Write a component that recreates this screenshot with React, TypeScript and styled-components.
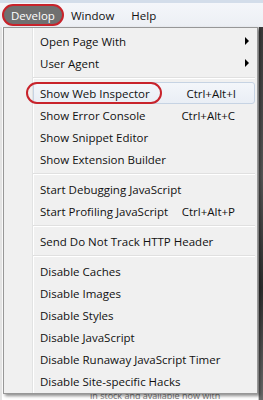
import React from "react";
import styled, { createGlobalStyle } from "styled-components";

const Global = createGlobalStyle`
  html, body { margin: 0; padding: 0; background: #fff; }
  body { width: 263px; height: 400px; overflow: hidden; font-family: "Segoe UI", "Open Sans", "Noto Sans", sans-serif; }
`;

const Screen = styled.div`
  position: relative;
  width: 263px;
  height: 400px;
  overflow: hidden;
  display: flex;
  flex-direction: column;
  font-size: 11.5px;
  color: #111;
`;

const MenuBar = styled.div`
  height: 24px;
  border-top: 3px solid #d3ddea;
  background: linear-gradient(#f4f6fa, #eceff4);
  display: flex;
  align-items: center;
  padding-left: 2px;
`;

const BarItem = styled.div<{ $active?: boolean }>`
  height: 22px;
  box-sizing: border-box;
  display: flex;
  align-items: center;
  padding: ${(p) => (p.$active ? "0 7px 0 7px" : "0 5px")};
  margin-right: ${(p) => (p.$active ? "0" : "3px")};
  border-radius: 11px;
  border: 2px solid ${(p) => (p.$active ? "#c8232b" : "transparent")};
  background: ${(p) => (p.$active ? "#707070" : "transparent")};
  color: ${(p) => (p.$active ? "#fff" : "#111")};
`;

const Page = styled.div`
  flex: 1;
  display: flex;
`;

const PageMain = styled.div`
  flex: 1;
  background: #fff;
  border-left: 2px solid #e4e4e4;
  display: flex;
  flex-direction: column;
  justify-content: flex-end;
`;

const PageNote = styled.div`
  font-size: 9px;
  color: #777;
  padding: 0 0 1px 88px;
  line-height: 7px;
  white-space: nowrap;
`;

const PageSide = styled.div`
  width: 4px;
  background: linear-gradient(#3a3a3a, #555 40%, #2d2d2d 70%, #6a6a6a);
  border-left: 1px solid #c9c9c9;
`;

const Menu = styled.div`
  position: absolute;
  left: 3px;
  top: 27px;
  width: 255px;
  box-sizing: border-box;
  border: 1px solid #979797;
  padding: 2px 2px 1px 2px;
  background: linear-gradient(
      to right,
      transparent 28px,
      #e2e3e3 28px,
      #e2e3e3 29px,
      #ffffff 29px,
      #ffffff 30px,
      transparent 30px
    ),
    #f0f0f0;
  box-shadow: 2px 2px 3px rgba(0, 0, 0, 0.45);
`;

const Item = styled.div<{ $hover?: boolean; $submenu?: boolean }>`
  height: 22px;
  box-sizing: border-box;
  display: flex;
  align-items: center;
  white-space: nowrap;
  padding-left: ${(p) => (p.$hover ? "6px" : "33px")};
  padding-right: ${(p) => (p.$submenu ? "5px" : p.$hover ? "18px" : "19px")};
  margin-left: ${(p) => (p.$hover ? "27px" : "0")};
  border-radius: 3px;
  border: 1px solid ${(p) => (p.$hover ? "#c6d3e3" : "transparent")};
  background: ${(p) => (p.$hover ? "linear-gradient(#f3f6fa, #e9eef5)" : "transparent")};
`;

const Label = styled.span<{ $circled?: boolean }>`
  box-sizing: border-box;
  height: ${(p) => (p.$circled ? "22px" : "auto")};
  display: inline-flex;
  align-items: center;
  border: ${(p) => (p.$circled ? "2px solid #c8232b" : "none")};
  border-radius: 11px;
  padding: ${(p) => (p.$circled ? "0 10px 0 12px" : "0")};
  margin-left: ${(p) => (p.$circled ? "-14px" : "0")};
`;

const Shortcut = styled.span`
  margin-left: auto;
`;

const Arrow = styled.span`
  margin-left: auto;
  width: 0;
  height: 0;
  border-top: 4px solid transparent;
  border-bottom: 4px solid transparent;
  border-left: 4px solid #000;
`;

const Separator = styled.div`
  height: 8px;
  display: flex;
  align-items: center;
  margin-left: 27px;
  &::before {
    content: "";
    flex: 1;
    height: 1px;
    background: #e0e0e0;
    border-bottom: 1px solid #fff;
  }
`;

type Entry =
  | { sep: true }
  | { label: string; shortcut?: string; submenu?: boolean; hover?: boolean; circled?: boolean };

const entries: Entry[] = [
  { label: "Open Page With", submenu: true },
  { label: "User Agent", submenu: true },
  { sep: true },
  { label: "Show Web Inspector", shortcut: "Ctrl+Alt+I", hover: true, circled: true },
  { label: "Show Error Console", shortcut: "Ctrl+Alt+C" },
  { label: "Show Snippet Editor" },
  { label: "Show Extension Builder" },
  { sep: true },
  { label: "Start Debugging JavaScript" },
  { label: "Start Profiling JavaScript", shortcut: "Ctrl+Alt+P" },
  { sep: true },
  { label: "Send Do Not Track HTTP Header" },
  { sep: true },
  { label: "Disable Caches" },
  { label: "Disable Images" },
  { label: "Disable Styles" },
  { label: "Disable JavaScript" },
  { label: "Disable Runaway JavaScript Timer" },
  { label: "Disable Site-specific Hacks" },
];

export default function App() {
  return (
    <Screen>
      <Global />
      <MenuBar>
        <BarItem $active>Develop</BarItem>
        <BarItem>Window</BarItem>
        <BarItem>Help</BarItem>
      </MenuBar>
      <Page>
        <PageMain>
          <PageNote>in stock and available now with</PageNote>
        </PageMain>
        <PageSide />
      </Page>
      <Menu>
        {entries.map((e, i) =>
          "sep" in e ? (
            <Separator key={i} />
          ) : (
            <Item key={i} $hover={e.hover} $submenu={e.submenu}>
              <Label $circled={e.circled}>{e.label}</Label>
              {e.shortcut && <Shortcut>{e.shortcut}</Shortcut>}
              {e.submenu && <Arrow />}
            </Item>
          )
        )}
      </Menu>
    </Screen>
  );
}
